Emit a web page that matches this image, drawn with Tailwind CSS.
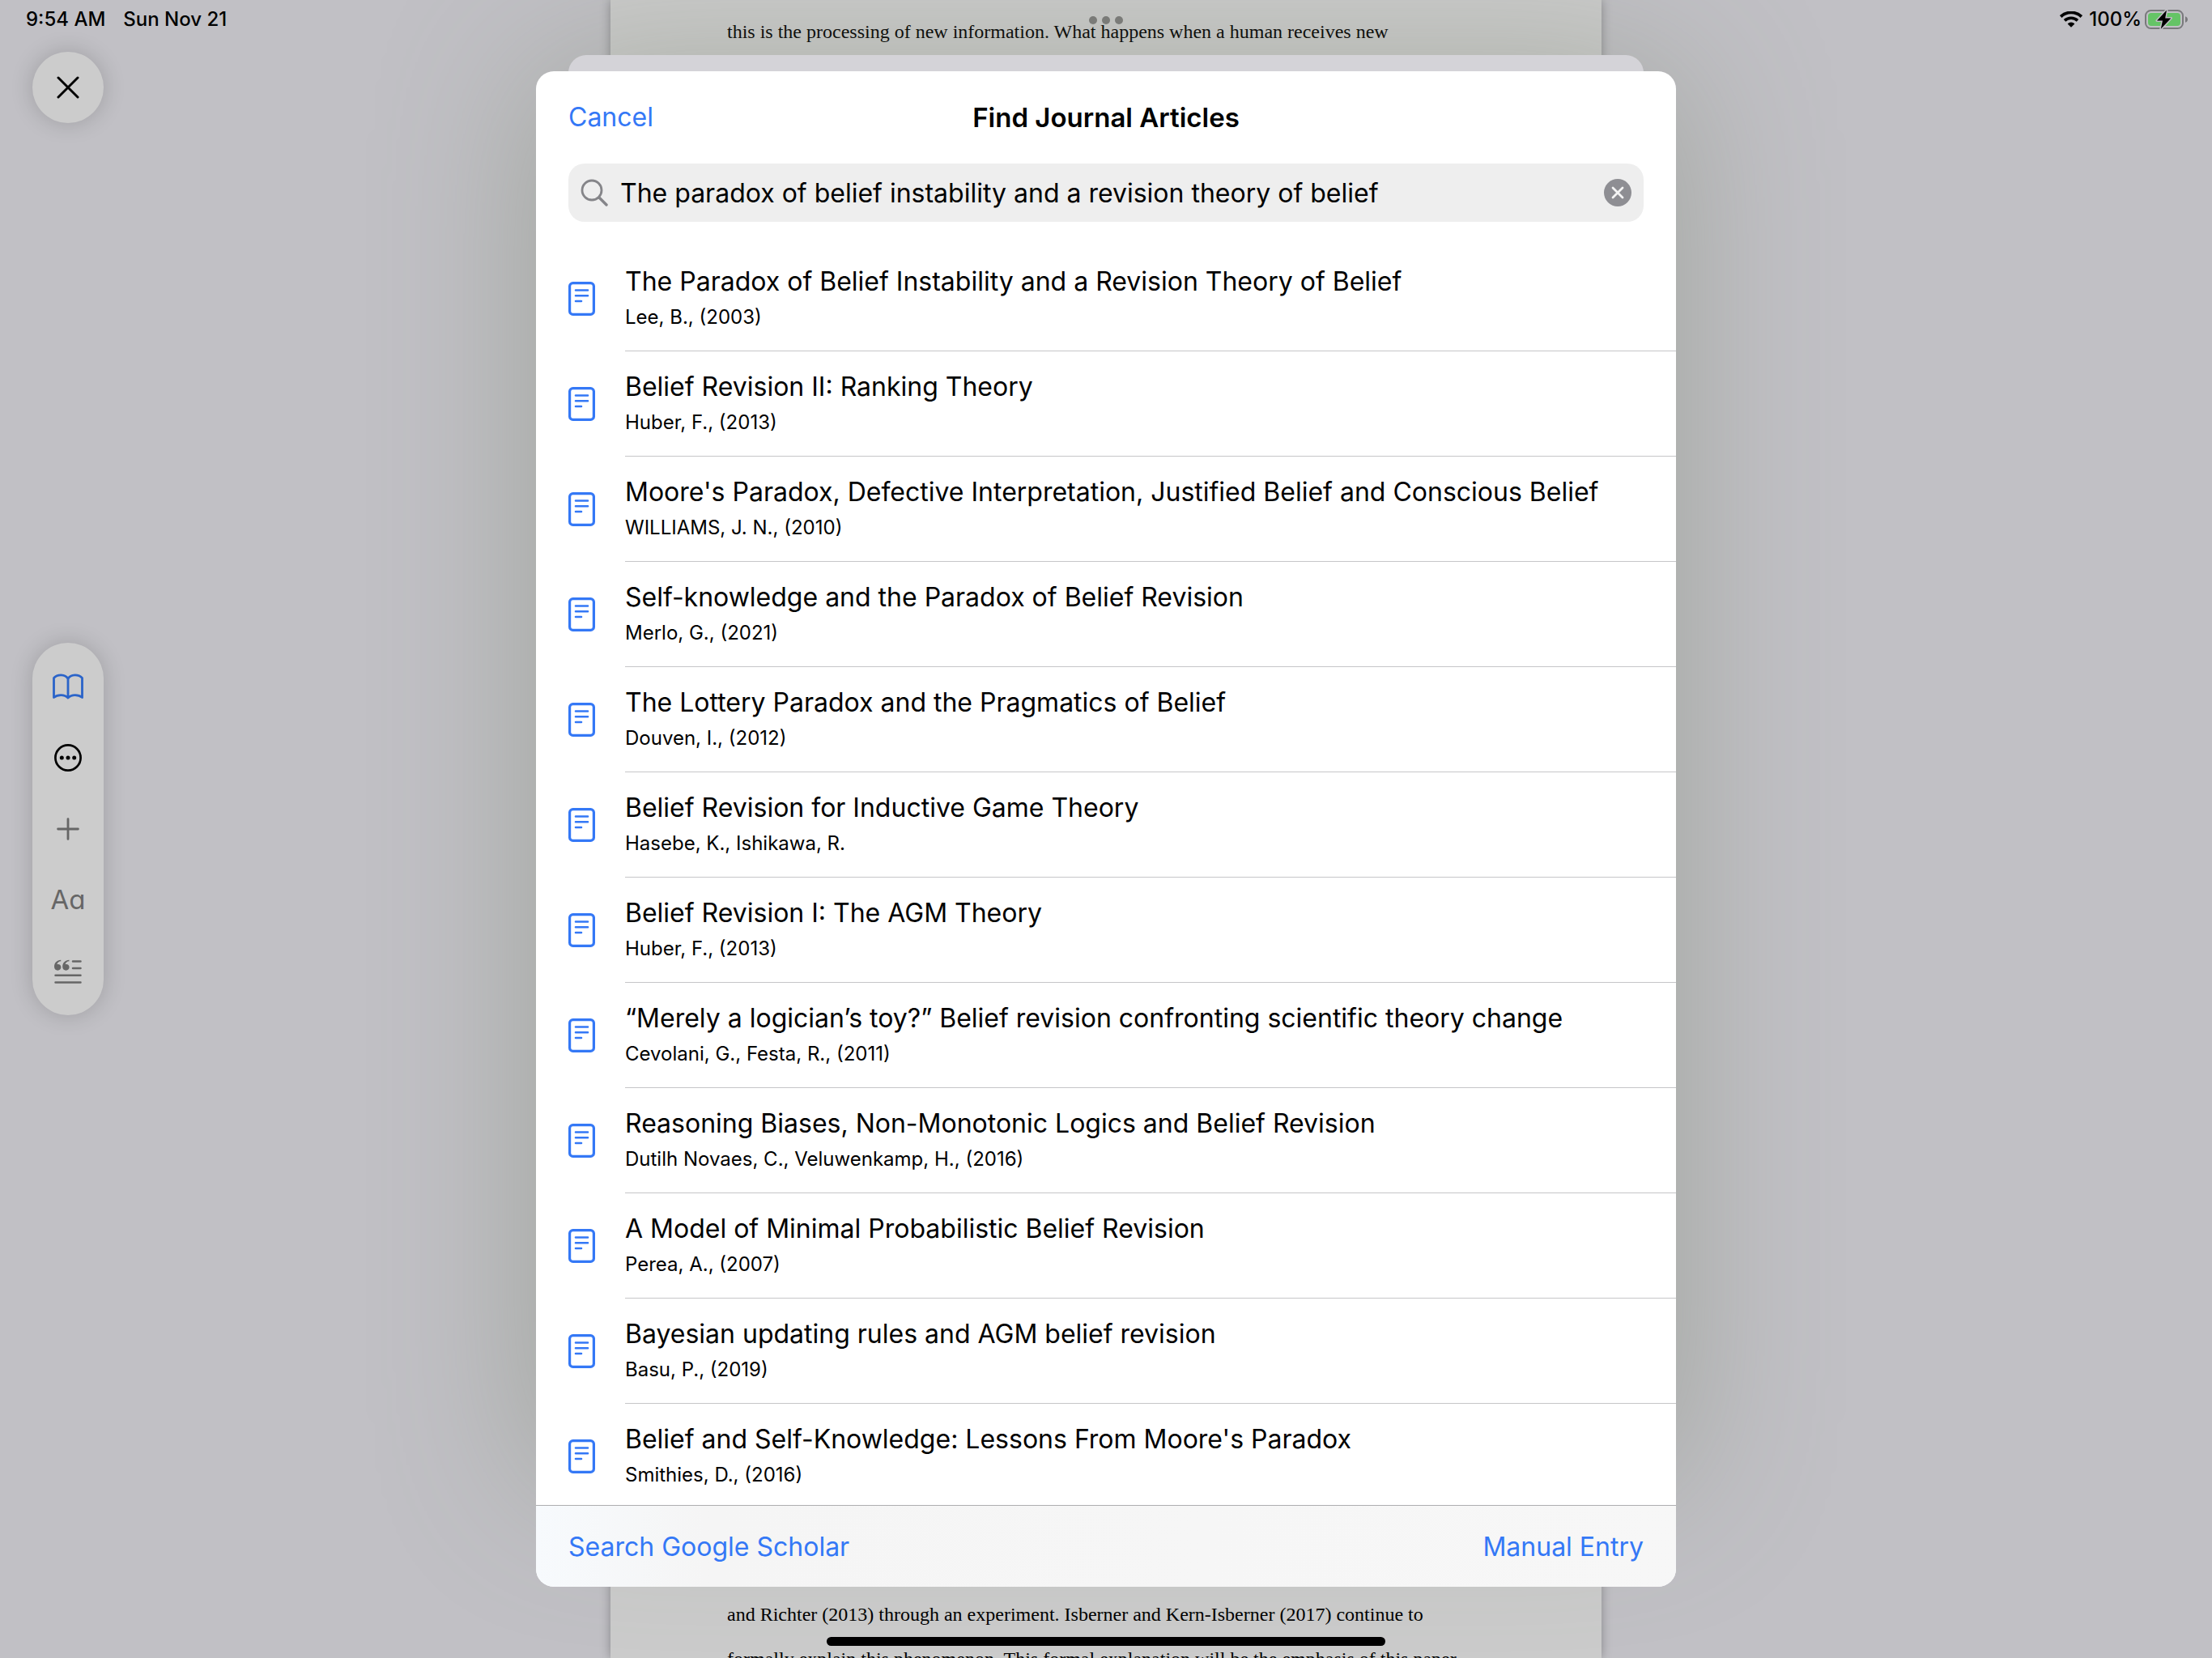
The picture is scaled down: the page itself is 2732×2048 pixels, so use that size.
<!DOCTYPE html>
<html lang="en">
<head>
<meta charset="utf-8">
<meta name="viewport" content="width=device-width, initial-scale=1">
<title>Find Journal Articles</title>
<script src="https://cdn.jsdelivr.net/npm/@tailwindcss/browser@4"></script>
</head>
<body class="relative h-screen overflow-hidden bg-[#c1c0c5] font-['Inter','Liberation_Sans',sans-serif] text-black">

<!-- Document page behind the sheet -->
<article class="absolute inset-y-0 left-1/2 flex w-full max-w-[1224px] -translate-x-1/2 flex-col justify-between bg-[#cbcbcb] px-36 pt-3 font-['Liberation_Serif',serif] text-[24px] leading-[55px] whitespace-nowrap shadow-[0_0_12px_rgb(0_0_0/0.3)]">
  <p>this is the processing of new information. What happens when a human receives new</p>
  <p class="-mb-[29px]">and Richter (2013) through an experiment. Isberner and Kern-Isberner (2017) continue to<br>formally explain this phenomenon. This formal explanation will be the emphasis of this paper.</p>
</article>

<!-- Sheets -->
<main class="relative flex h-full justify-center px-5 py-[88px]">
  <div class="relative flex w-full max-w-[1408px] flex-col">
    <div class="absolute inset-x-0 top-0 bottom-[130px] rounded-[40px] shadow-[0_0_190px_rgb(117_128_105/0.44)]" aria-hidden="true"></div>
    <div class="absolute inset-x-10 -top-5 h-16 rounded-t-[22px] bg-[#d4d3d8]" aria-hidden="true"></div>

    <section role="dialog" aria-labelledby="sheet-title" class="relative flex min-h-0 flex-1 flex-col overflow-hidden rounded-[22px] bg-white">
      <header class="grid h-28 shrink-0 grid-cols-[1fr_auto_1fr] items-center px-10 pt-0.5 leading-10">
        <button type="button" class="justify-self-start text-[32px] text-[#3478f6]">Cancel</button>
        <h1 id="sheet-title" class="text-[33px] font-semibold">Find Journal Articles</h1>
      </header>

      <div class="px-10 pt-0.5">
        <div class="flex h-[72px] items-center gap-[15px] rounded-[20px] bg-[#eeeeee] px-[15px]">
          <svg class="size-[34px] shrink-0" viewBox="0 0 34 34" fill="none" stroke="#858589" stroke-width="2.8" stroke-linecap="round" aria-hidden="true"><circle cx="14" cy="14" r="12"/><path d="M23 23 32 32" stroke-width="3.4"/></svg>
          <input type="text" aria-label="Search articles" value="The paradox of belief instability and a revision theory of belief" class="min-w-0 flex-1 bg-transparent pt-0.5 text-[32px] leading-10 outline-none">
          <button type="button" aria-label="Clear search" class="shrink-0">
            <svg class="size-[34px]" viewBox="0 0 34 34" aria-hidden="true"><circle cx="17" cy="17" r="17" fill="#8e8e93"/><path d="M11 11 23 23M23 11 11 23" stroke="#f4f4f4" stroke-width="2.8" stroke-linecap="round"/></svg>
          </button>
        </div>
      </div>

      <ul id="results" class="min-h-0 flex-1 overflow-hidden pt-[30px]"></ul>

      <footer class="flex h-[101px] shrink-0 items-center justify-between border-t border-[#aeaeb0] bg-linear-to-r from-[#f7fafd] via-[#f5f5f5] via-15% to-[#f7f7f7] px-10 pt-0.5 text-[32px] leading-10 text-[#3478f6]">
        <a href="#scholar">Search Google Scholar</a>
        <button type="button">Manual Entry</button>
      </footer>
    </section>
  </div>
</main>

<!-- Status bar -->
<div class="absolute inset-x-0 top-0 flex h-12 items-center justify-between pr-[29px] pl-8 text-[24px] font-medium">
  <div class="flex gap-[22px]"><span>9:54 AM</span><span>Sun Nov 21</span></div>
  <div class="flex items-center">
    <svg class="mr-2 h-5 w-7" viewBox="0 0 28 20" fill="none" stroke="#000" aria-hidden="true"><path d="M1.2 6.6a18.5 18.5 0 0 1 25.6 0" stroke-width="3.8"/><path d="M6 11.4a11.6 11.6 0 0 1 16 0" stroke-width="3.6"/><path d="M14 19.8 9.6 15.4a6.3 6.3 0 0 1 8.8 0z" fill="#000" stroke="none"/></svg>
    <span class="mr-1">100%</span>
    <svg class="h-6 w-[54px]" viewBox="0 0 54 24" aria-hidden="true"><rect x="1" y="1" width="46" height="22" rx="6.5" fill="none" stroke="#79797c" stroke-width="2"/><rect x="4" y="4" width="40" height="16" rx="4" fill="#65c466"/><path d="M50 8.2c2 .7 3 2.2 3 3.8s-1 3.1-3 3.8z" fill="#79797c"/><path d="M27 .4 15 13.400h7L19.800 23.800 32.400 10.400h-7.200z" fill="#000" stroke="#c1c0c5" stroke-width="3" stroke-linejoin="round" paint-order="stroke"/></svg>
  </div>
</div>

<!-- Multitasking dots -->
<div class="absolute top-5 left-1/2 flex -translate-x-1/2 gap-1.5" aria-hidden="true">
  <i class="size-2.5 rounded-full bg-[#7a7b78]"></i><i class="size-2.5 rounded-full bg-[#7a7b78]"></i><i class="size-2.5 rounded-full bg-[#7a7b78]"></i>
</div>

<!-- Close button and tool rail -->
<button type="button" aria-label="Close" class="absolute top-16 left-10 flex size-[88px] items-center justify-center rounded-full bg-[#cccccc] shadow-[0_0_28px_rgb(0_0_0/0.18)]">
  <svg class="size-7" viewBox="0 0 28 28" stroke="#000" stroke-width="3" stroke-linecap="round" aria-hidden="true"><path d="M2 2 26 26M26 2 2 26"/></svg>
</button>

<div class="absolute top-24 bottom-24 left-10 flex items-center">
  <nav aria-label="Tools" class="flex flex-col rounded-[44px] bg-[#cccccc] py-[10px] text-[#666666] shadow-[0_0_28px_rgb(0_0_0/0.18)]">
    <button type="button" aria-label="Library" class="flex size-[88px] items-center justify-center">
      <svg class="h-8 w-[38px]" viewBox="0 0 38 32" fill="none" stroke="#2b64c9" stroke-width="2.8" stroke-linejoin="round" stroke-linecap="round" aria-hidden="true"><path d="M19 6.500C15.500.500 6 .500 1.500 5.500V29.500C6 25.800 14.500 25.300 19 30 23.500 25.300 32 25.800 36.500 29.500V5.500C32 .500 22.500.500 19 6.500V29"/></svg>
    </button>
    <button type="button" aria-label="More" class="flex size-[88px] items-center justify-center">
      <svg class="size-[34px]" viewBox="0 0 34 34" aria-hidden="true"><circle cx="17" cy="17" r="15.6" fill="none" stroke="#000" stroke-width="2.7"/><circle cx="9.3" cy="17" r="2.5"/><circle cx="17" cy="17" r="2.5"/><circle cx="24.7" cy="17" r="2.5"/></svg>
    </button>
    <button type="button" aria-label="Add" class="flex size-[88px] items-center justify-center">
      <svg class="size-7" viewBox="0 0 28 28" stroke="#666" stroke-width="2.8" stroke-linecap="round" aria-hidden="true"><path d="M14 1.6V26.4M1.6 14H26.4"/></svg>
    </button>
    <button type="button" aria-label="Text format" class="flex size-[88px] items-center justify-center text-[33px] [font-feature-settings:'cv11']">Aa</button>
    <button type="button" aria-label="Citations" class="flex size-[88px] items-center justify-center">
      <svg class="h-[30px] w-[34px]" viewBox="0 0 34 30" fill="#666" stroke="#666" stroke-width="2.5" stroke-linecap="round" aria-hidden="true"><path d="M23 2.500H32.500M23 11H32.500M1.500 19.800H32.500M1.500 28.500H32.500"/><path d="M8.200.8C3.400.8 0 4.400 0 9c0 2.800 1.800 4.700 4.300 4.700 2.300 0 4.100-1.700 4.100-3.900S6.800 6 4.700 6c-.6 0-1 .1-1.400.3C3.900 4 5.800 2.400 8.300 2.300z" stroke="none"/><path d="M18.400.8C13.600.8 10.200 4.400 10.200 9c0 2.800 1.800 4.700 4.300 4.700 2.300 0 4.100-1.700 4.100-3.900S17 6 14.900 6c-.6 0-1 .1-1.400.3.600-2.300 2.500-3.900 5-4z" stroke="none"/></svg>
    </button>
  </nav>
</div>

<!-- Home indicator -->
<div class="absolute bottom-[15px] left-1/2 h-[11px] w-[690px] -translate-x-1/2 rounded-full bg-black" aria-hidden="true"></div>

<script>
const articles = [
  ["The Paradox of Belief Instability and a Revision Theory of Belief", "Lee, B., (2003)"],
  ["Belief Revision II: Ranking Theory", "Huber, F., (2013)"],
  ["Moore's Paradox, Defective Interpretation, Justified Belief and Conscious Belief", "WILLIAMS, J. N., (2010)"],
  ["Self-knowledge and the Paradox of Belief Revision", "Merlo, G., (2021)"],
  ["The Lottery Paradox and the Pragmatics of Belief", "Douven, I., (2012)"],
  ["Belief Revision for Inductive Game Theory", "Hasebe, K., Ishikawa, R."],
  ["Belief Revision I: The AGM Theory", "Huber, F., (2013)"],
  ["“Merely a logician’s toy?” Belief revision confronting scientific theory change", "Cevolani, G., Festa, R., (2011)"],
  ["Reasoning Biases, Non-Monotonic Logics and Belief Revision", "Dutilh Novaes, C., Veluwenkamp, H., (2016)"],
  ["A Model of Minimal Probabilistic Belief Revision", "Perea, A., (2007)"],
  ["Bayesian updating rules and AGM belief revision", "Basu, P., (2019)"],
  ["Belief and Self-Knowledge: Lessons From Moore's Paradox", "Smithies, D., (2016)"]
];
document.getElementById("results").innerHTML = articles.map(([title, authors]) => `
  <li>
    <button type="button" class="flex h-[130px] w-full items-center gap-[37px] pl-10 text-left">
      <svg class="h-[42px] w-[33px] shrink-0" viewBox="0 0 33 42" fill="none" stroke="#3478f6" aria-hidden="true"><rect x="1.6" y="1.6" width="29.8" height="38.8" rx="4" stroke-width="3.2"/><path d="M9 10.500H24M9 17.300H24M9 24H16" stroke-width="2.6" stroke-linecap="round"/></svg>
      <span class="flex h-full min-w-0 flex-1 flex-col justify-center gap-1 border-b border-[#c6c6c8] pt-[3px] leading-10">
        <span class="truncate text-[32px]">${title}</span>
        <span class="truncate text-[24px]">${authors}</span>
      </span>
    </button>
  </li>`).join("");
</script>
</body>
</html>
